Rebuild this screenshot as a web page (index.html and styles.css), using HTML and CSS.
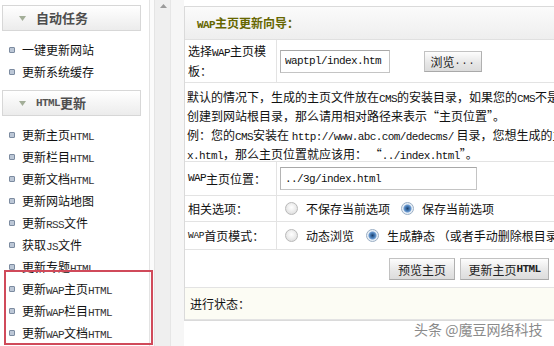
FILE: index.html
```html
<!DOCTYPE html>
<html lang="zh-CN">
<head>
<meta charset="utf-8">
<title>WAP主页更新向导</title>
<link rel="stylesheet" href="styles.css">
</head>
<body>
<div class="page">
  <aside class="side">
    <div class="shead"><svg class="arr" width="7" height="5" viewBox="0 0 7 5"><path d="M0 0H7L3.5 5Z" fill="#a3ae98"/></svg>自动任务</div>
    <ul class="nav">
      <li>一键更新网站</li>
      <li>更新系统缓存</li>
    </ul>
    <div class="shead"><svg class="arr" width="7" height="5" viewBox="0 0 7 5"><path d="M0 0H7L3.5 5Z" fill="#a3ae98"/></svg><span class="m mb">HTML</span>更新</div>
    <ul class="nav">
      <li>更新主页<span class="m">HTML</span></li>
      <li>更新栏目<span class="m">HTML</span></li>
      <li>更新文档<span class="m">HTML</span></li>
      <li>更新网站地图</li>
      <li>更新<span class="m">RSS</span>文件</li>
      <li>获取<span class="m">JS</span>文件</li>
      <li>更新专题<span class="m">HTML</span></li>
      <li>更新<span class="m">WAP</span>主页<span class="m">HTML</span></li>
      <li>更新<span class="m">WAP</span>栏目<span class="m">HTML</span></li>
      <li>更新<span class="m">WAP</span>文档<span class="m">HTML</span></li>
    </ul>
    <div class="mark"></div>
  </aside>
  <div class="sbar"><svg class="up" width="7" height="4" viewBox="0 0 7 4"><path d="M0 4H7L3.5 0Z" fill="#9a9a9a"/></svg></div>
  <div class="gutter"></div>
  <main class="main">
    <div class="box">
      <div class="title"><span class="m mb">WAP</span>主页更新向导：</div>
      <div class="row r1">
        <div class="lab">选择<span class="m">WAP</span>主页模板：</div>
        <div class="val"><input class="inp w1" type="text" value="waptpl/index.htm"><span class="btn b1">浏览<span class="dots">...</span></span></div>
      </div>
      <div class="row r2">
        <div class="desc">默认的情况下，生成的主页文件放在<span class="m">CMS</span>的安装目录，如果您的<span class="m">CMS</span>不是安装在网站根目录，而您又想把主页<br>创建到网站根目录，那么请用相对路径来表示“主页位置”。<br>例：您的<span class="m">CMS</span>安装在 <span class="m">http://www.abc.com/dedecms/</span> 目录，您想生成的主页为 <span class="m">http://www.abc.com/inde</span><br><span class="m">x.html</span>，那么主页位置就应该用： “<span class="m">../index.html</span>”。</div>
      </div>
      <div class="row r3">
        <div class="lab"><span class="m">WAP</span>主页位置：</div>
        <div class="val"><input class="inp w2" type="text" value="../3g/index.html"></div>
      </div>
      <div class="row r4">
        <div class="lab">相关选项：</div>
        <div class="val opts"><span class="radio"></span><span class="opt">不保存当前选项</span><span class="radio on"></span><span class="opt">保存当前选项</span></div>
      </div>
      <div class="row r5">
        <div class="lab"><span class="m ms">WAP</span>首页模式：</div>
        <div class="val opts"><span class="radio"></span><span class="opt">动态浏览</span><span class="radio on"></span><span class="opt">生成静态 （或者手动删除根目录的index.html文件）</span></div>
      </div>
      <div class="row r6">
        <span class="btn b2">预览主页</span><span class="btn b3">更新主页<span class="m mb">HTML</span></span>
      </div>
      <div class="row r7">进行状态：</div>
    </div>
  </main>
  <div class="wm">头条 @魔豆网络科技</div>
</div>
</body>
</html>
```
FILE: styles.css
```css
html, body {
  margin: 0;
  padding: 0;
  background: #fff;
}
body {
  font-family: "Noto Sans CJK SC", "DejaVu Sans", sans-serif;
  font-size: 12px;
  color: #111;
  width: 554px;
  height: 346px;
  overflow: hidden;
}
.page {
  position: relative;
  display: flex;
  width: 554px;
  height: 346px;
  overflow: hidden;
}
.m {
  font-family: "Liberation Mono", monospace;
  font-size: 11px;
  letter-spacing: -0.6px;
  line-height: 1;
}
.mb { font-weight: bold; }
.ms { font-size: 9.5px; letter-spacing: -0.3px; }

/* sidebar */
.side {
  position: relative;
  flex: 0 0 149px;
  border-right: 1px solid #e3e3e3;
  padding-top: 5px;
  box-sizing: content-box;
}
.shead {
  box-sizing: border-box;
  margin-left: 2px;
  width: 139px;
  height: 26px;
  border: 1px solid #d7d7d7;
  background: linear-gradient(#ffffff, #ececec);
  display: flex;
  align-items: center;
  padding-left: 16px;
  font-size: 13px;
  font-weight: bold;
  color: #4e4e4e;
  line-height: 24px;
}
.shead .arr { margin-right: 10px; }
.shead .m { font-size: 11px; color: #555; }
.nav {
  list-style: none;
  margin: 0;
  padding: 8px 0 7px 0;
}
.nav li {
  position: relative;
  height: 22px;
  line-height: 22px;
  padding-left: 22px;
  white-space: nowrap;
}
.nav li::before {
  content: "";
  position: absolute;
  left: 9px;
  top: 8px;
  width: 4px;
  height: 4px;
  border: 1px solid #7c8ba0;
  border-radius: 1px;
  background: #bcc7d6;
}
.nav .m { color: #333; }
.mark {
  position: absolute;
  left: 4px;
  top: 270px;
  width: 145px;
  height: 71px;
  border: 2px solid #d04a5a;
  z-index: 2;
}

/* scrollbar strip */
.sbar {
  flex: 0 0 20px;
  border-right: 1px solid #e6e6e6;
  background: linear-gradient(to right, #fbfbfb 0 4px, #e4e4e4 4px 5px, #efefef 5px);
  position: relative;
}
.sbar .up {
  position: absolute;
  left: 10px;
  top: 4px;
}
.gutter {
  flex: 0 0 13px;
  background: #f6f6f6;
}

/* main */
.main {
  flex: 0 0 auto;
  padding-top: 6px;
}
.box {
  width: 440px;
  border: 1px solid #dadada;
  border-right: none;
  background: #fff;
}
.title {
  height: 33px;
  box-sizing: border-box;
  border-bottom: 1px solid #e0e0e0;
  background: linear-gradient(#fbfbfb, #eeeeee);
  padding-left: 12px;
  line-height: 32px;
  font-weight: bold;
  color: #666600;
}
.row {
  display: flex;
  box-sizing: border-box;
  border-bottom: 1px solid #e3e3e3;
}
.lab {
  box-sizing: border-box;
  flex: 0 0 92px;
  border-right: 1px solid #e3e3e3;
  padding: 0 3px 0 3px;
  display: flex;
  align-items: center;
  line-height: 20px;
}
.val {
  flex: 1;
  display: flex;
  align-items: center;
}
.r1 { height: 43px; }
.r1 .val { padding-left: 3px; }
.r1 .lab { display: block; padding-top: 1px; }
.r2 { height: 79px; }
.r3 { height: 34px; }
.r3 .val { padding-left: 3px; }
.r4 { height: 26px; }
.r5 { height: 28px; }
.r6 { height: 38px; padding-left: 204px; padding-top: 8px; align-items: flex-start; }
.r7 {
  height: 32px;
  background: #fcfcf4;
  padding-left: 5px;
  align-items: center;
}
.desc {
  white-space: nowrap;
  line-height: 19px;
  padding: 4px 0 0 2px;
}
.inp {
  box-sizing: border-box;
  height: 23px;
  border: 1px solid #c4c4c4;
  border-top-color: #a8a8a8;
  border-left-color: #b4b4b4;
  padding: 0 4px;
  margin: 0;
  font-family: "Liberation Mono", monospace;
  font-size: 11px;
  letter-spacing: -0.6px;
  color: #111;
  background: #fff;
  outline: none;
}
.w1 { width: 110px; }
.w2 { width: 197px; }
.btn {
  box-sizing: border-box;
  display: inline-flex;
  align-items: center;
  justify-content: center;
  height: 22px;
  border: 1px solid #c2c2c2;
  border-bottom-color: #a9a9a9;
  border-right-color: #b0b0b0;
  background: linear-gradient(#fdfdfd, #e6e6e6 60%, #dcdcdc);
  color: #222;
  white-space: nowrap;
}
.b1 { width: 58px; height: 21px; margin-left: 34px; }
.b1 .dots { font-family: "Liberation Mono", monospace; font-size: 10px; letter-spacing: 1px; }
.b2 { width: 66px; }
.b3 { width: 89px; margin-left: 5px; }
.opts { padding-left: 8px; white-space: nowrap; }
.radio {
  box-sizing: border-box;
  flex: 0 0 13px;
  width: 13px;
  height: 13px;
  border-radius: 50%;
  border: 1px solid #b9b9b9;
  background: radial-gradient(circle at 50% 40%, #ffffff 0, #eeeeee 45%, #d6d6d6 100%);
  margin-right: 8px;
}
.radio.on {
  border-color: #9aaec4;
  background: radial-gradient(circle at 50% 50%, #1d3f6a 0, #3f73ad 2px, #6c9ad0 3.5px, #e6eef6 4.5px, #f4f7fa 100%);
}
.opt { margin-right: 11px; }
.r5 .opt { margin-right: 12px; }

/* watermark */
.wm {
  position: absolute;
  left: 414px;
  top: 319px;
  font-size: 14px;
  color: #8a8a8a;
  text-shadow: 0 0 2px #fff, 0 0 1px #fff;
  white-space: nowrap;
}
```
